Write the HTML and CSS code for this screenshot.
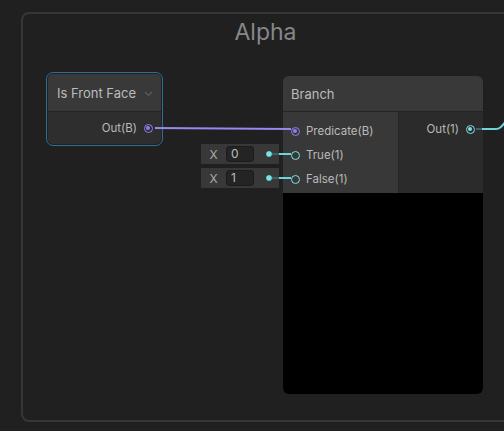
FILE: index.html
```html
<!DOCTYPE html>
<html>
<head>
    <title>Shader Graph - Alpha</title>
    <link rel="stylesheet" href="styles.css">
</head>
<body>
    <div class="canvas">
        <div class="group">
            <div class="group-title">Alpha</div>
        </div>

        <!-- wires -->
        <svg class="wires" width="504" height="431" viewBox="0 0 504 431">
            <path d="M155 128 L291 129" stroke="#9c86f2" stroke-width="2" fill="none"/>
            <path d="M272 154 L279 154" stroke="#3e6266" stroke-width="2"/>
            <path d="M279 154 L291 154" stroke="#6fd3da" stroke-width="2"/>
            <path d="M272 178 L279 178" stroke="#3e6266" stroke-width="2"/>
            <path d="M279 178 L291 178" stroke="#6fd3da" stroke-width="2"/>
            <path d="M476 129 L482 129" stroke="#3e6266" stroke-width="2"/>
            <path d="M482 129 L496 129 C500 129 502 126 507 120" stroke="#6fd3da" stroke-width="2" fill="none"/>
        </svg>

        <!-- Is Front Face -->
        <div class="node selected front-face">
            <div class="node-inner">
                <div class="node-title">
                    <span>Is Front Face</span>
                    <svg class="chevron" width="9" height="6" viewBox="0 0 9 6">
                        <path d="M1 1 L4.5 4.5 L8 1" stroke="#5c5c5c" stroke-width="1.2" fill="none"/>
                    </svg>
                </div>
                <div class="node-body">
                    <div class="port-row out">
                        <span>Out(B)</span>
                        <span class="port bool connected"></span>
                    </div>
                </div>
            </div>
        </div>

        <!-- inline values -->
        <div class="inline-value v-true">
            <span class="axis">X</span>
            <span class="field">0</span>
            <span class="dot"></span>
        </div>
        <div class="inline-value v-false">
            <span class="axis">X</span>
            <span class="field">1</span>
            <span class="dot"></span>
        </div>

        <!-- Branch -->
        <div class="node branch">
            <div class="node-title">Branch</div>
            <div class="ports">
                <div class="inputs">
                    <div class="port-row">
                        <span class="port bool connected"></span>
                        <span>Predicate(B)</span>
                    </div>
                    <div class="port-row">
                        <span class="port float"></span>
                        <span>True(1)</span>
                    </div>
                    <div class="port-row">
                        <span class="port float"></span>
                        <span>False(1)</span>
                    </div>
                </div>
                <div class="outputs">
                    <div class="port-row out">
                        <span>Out(1)</span>
                        <span class="port float connected"></span>
                    </div>
                </div>
            </div>
            <div class="preview"></div>
        </div>
    </div>
</body>
</html>
```

FILE: styles.css
```css
body {
    margin: 0;
    padding: 0;
    background-color: #202020;
    font-family: Inter, "Noto Sans", sans-serif;
    color: #bdbdbd;
    overflow: hidden;
}
.canvas {
    position: relative;
    width: 504px;
    height: 431px;
    overflow: hidden;
}
.group {
    position: absolute;
    left: 21px;
    top: 12px;
    width: 500px;
    height: 406px;
    border: 2px solid #363636;
    border-radius: 8px;
}
.group-title {
    margin-left: -15px;
    padding-top: 4px;
    text-align: center;
    font-size: 23px;
    color: #878787;
}
.wires {
    position: absolute;
    left: 0;
    top: 0;
    z-index: 2;
}
.node {
    position: absolute;
    z-index: 1;
}
.front-face {
    left: 46px;
    top: 72px;
    width: 115px;
    height: 72px;
    border: 1px solid #2b7097;
    border-radius: 7px;
}
.front-face .node-inner {
    margin: 1px;
    height: 70px;
    border-radius: 5px;
    overflow: hidden;
    background: #2e2e2e;
}
.node-title {
    display: flex;
    align-items: center;
    justify-content: space-between;
    background: #393939;
    font-size: 13px;
    color: #bcbcbc;
    border-bottom: 1px solid #242424;
}
.front-face .node-title {
    height: 37px;
    padding: 0 8px 0 9px;
}
.chevron {
    margin-top: 2px;
}
.node-body {
    height: 32px;
    display: flex;
    align-items: center;
    justify-content: flex-end;
    padding-right: 8px;
}
.port-row {
    display: flex;
    align-items: center;
    height: 24px;
    gap: 6px;
    font-size: 11.5px;
    color: #bababa;
}
.port-row.out {
    justify-content: flex-end;
    gap: 7px;
}
.port {
    box-sizing: border-box;
    width: 9px;
    height: 9px;
    border-radius: 50%;
    border: 1.5px solid #7de0e6;
    position: relative;
}
.port.bool {
    border-color: #8f7ef0;
}
.port.connected::after {
    content: "";
    position: absolute;
    left: 1px;
    top: 1px;
    width: 4px;
    height: 4px;
    border-radius: 50%;
    background: #7de0e6;
}
.port.bool.connected::after {
    background: #8f7ef0;
}
.branch {
    left: 283px;
    top: 76px;
    width: 200px;
    height: 318px;
    border-radius: 6px;
    overflow: hidden;
    background: #2c2c2c;
}
.branch .node-title {
    height: 35px;
    padding-left: 8px;
}
.ports {
    display: flex;
    height: 81px;
}
.inputs {
    width: 116px;
    box-sizing: border-box;
    background: #383838;
    padding: 7px 0 0 8px;
    border-right: 1px solid #272727;
}
.outputs {
    flex: 1;
    padding: 5px 8px 0 0;
    background: #2b2b2b;
}
.preview {
    height: 201px;
    background: #000;
}
.inline-value {
    position: absolute;
    left: 201px;
    width: 78px;
    height: 20px;
    background: #383838;
    display: flex;
    align-items: center;
    font-size: 12px;
    color: #a8a8a8;
}
.v-true {
    top: 144px;
}
.v-false {
    top: 168px;
}
.axis {
    width: 25px;
    text-align: center;
}
.field {
    box-sizing: border-box;
    width: 28px;
    height: 16px;
    padding-left: 4px;
    background: #242424;
    border: 1px solid #1c1c1c;
    border-radius: 3px;
    color: #bdbdbd;
    line-height: 14px;
}
.dot {
    margin-left: 11px;
    width: 6px;
    height: 6px;
    border-radius: 50%;
    background: #7de0e6;
    border: 1px solid #1e2a2b;
}
```
